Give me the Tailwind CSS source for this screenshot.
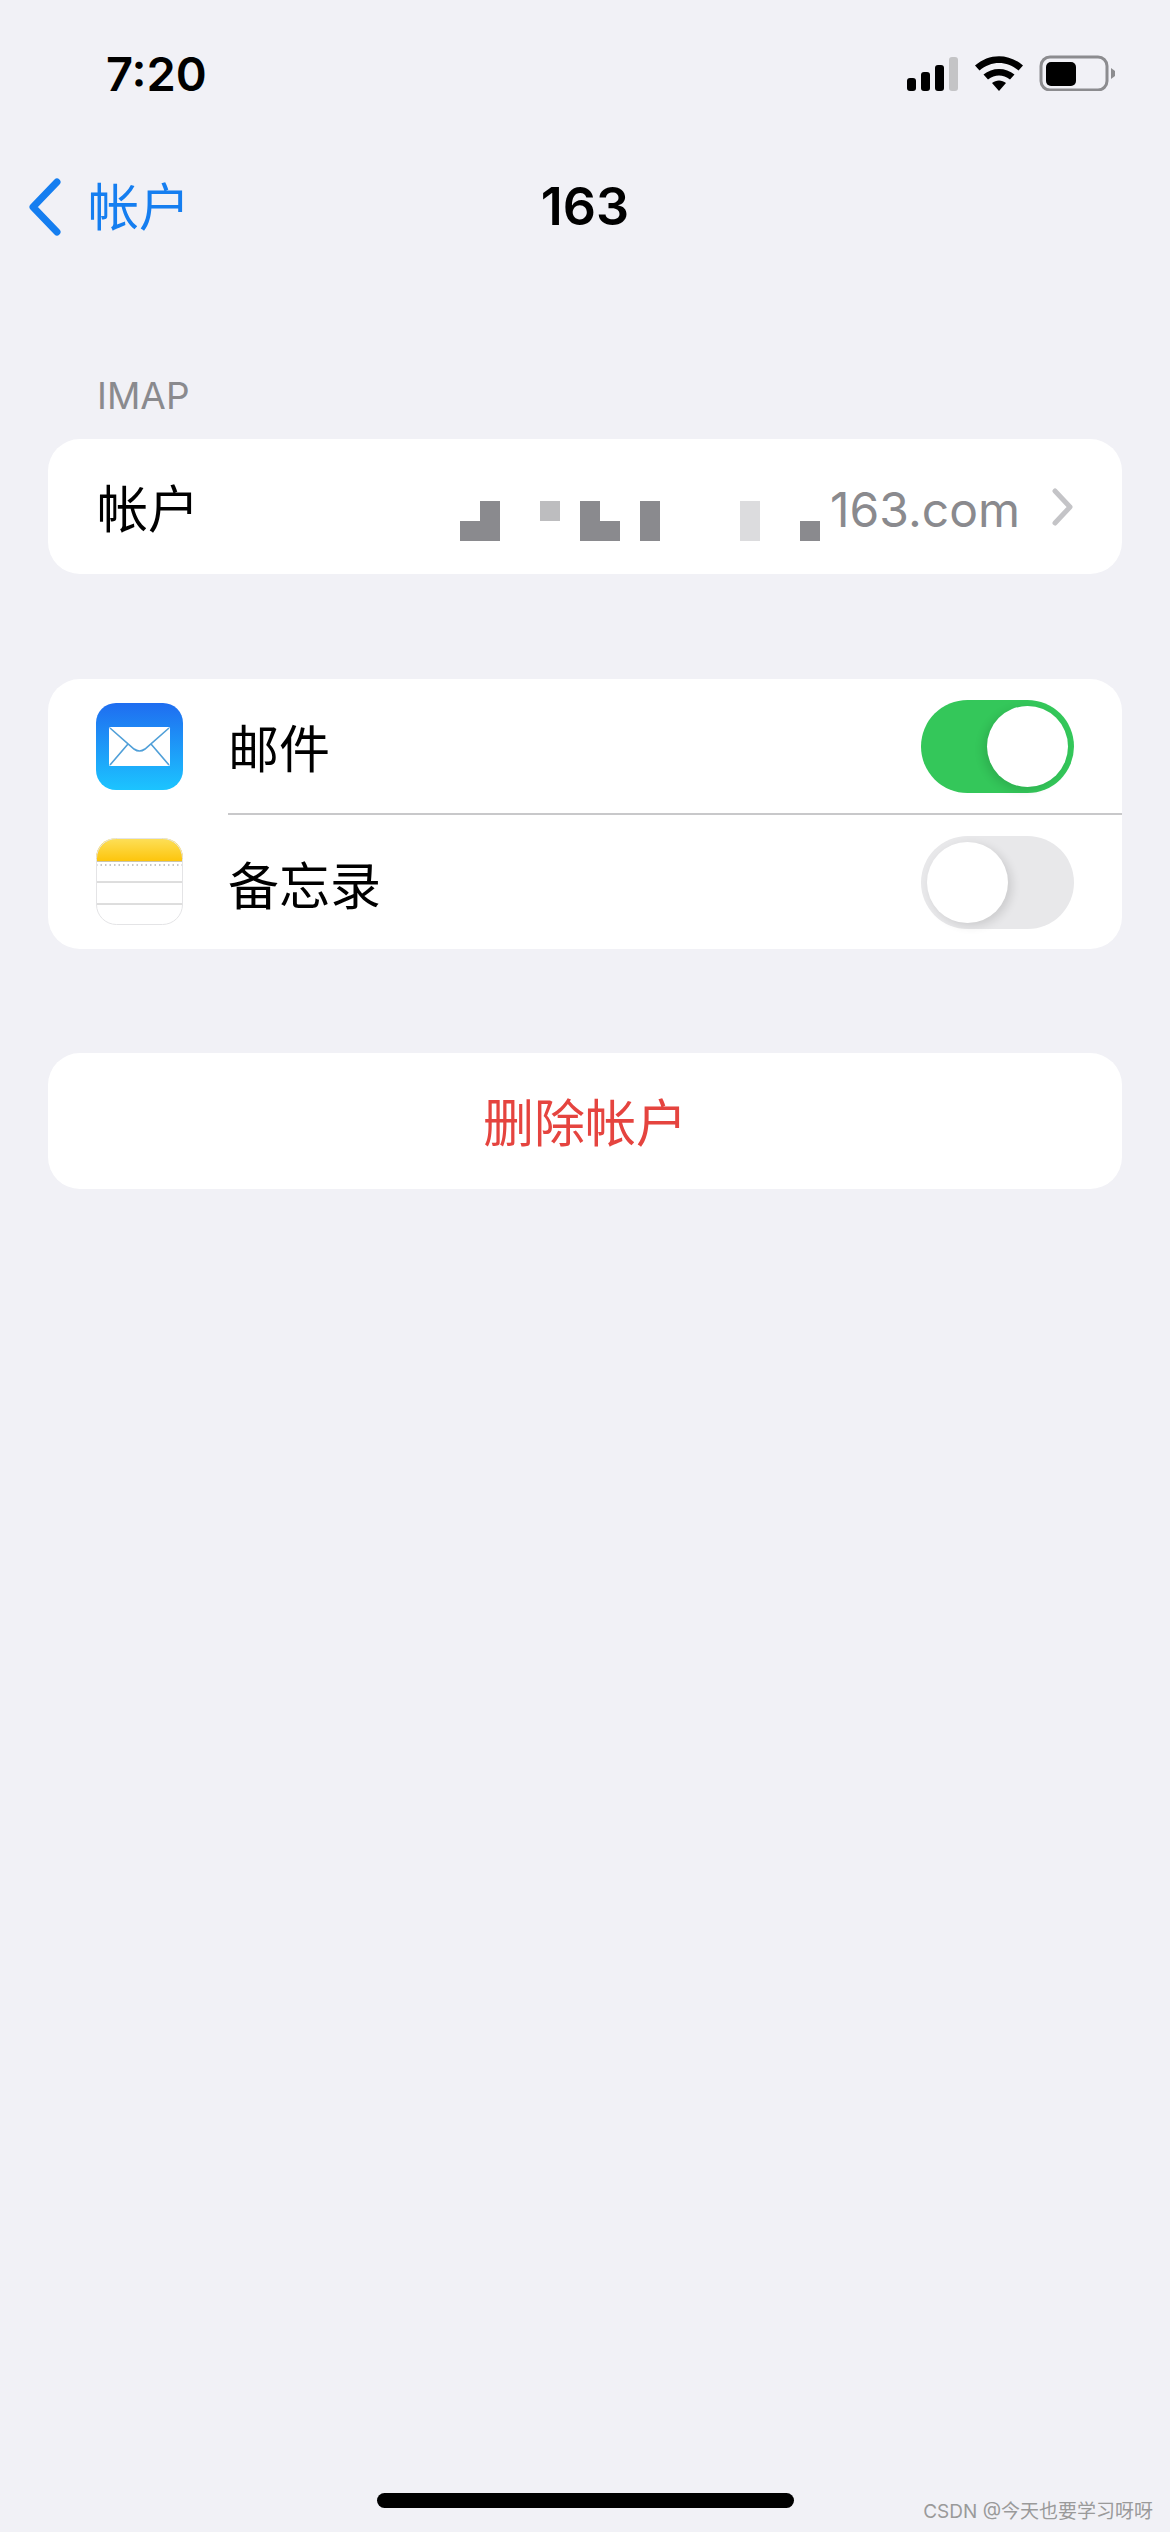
<!DOCTYPE html>
<html lang="zh-CN">
  <head>
    <meta charset="UTF-8" />
    <meta name="viewport" content="width=device-width, initial-scale=1.0" />
    <title>163</title>
    <script src="https://cdn.jsdelivr.net/npm/@tailwindcss/browser@4"></script>
  </head>
  <body class="bg-[#f1f1f6]">
    <div class="relative flex h-[2532px] w-[1170px] flex-col overflow-hidden bg-[#f1f1f6] font-['Inter','Noto_Sans_CJK_SC',sans-serif] text-black">
      <!-- status bar -->
      <div class="flex h-[162px] items-start justify-between pt-[46px] pl-[106px] pr-[55px]">
        <span class="text-[47px] leading-[56px] font-semibold">7:20</span>
        <svg class="mt-[9px]" width="208" height="36" viewBox="0 0 208 36">
          <rect x="0" y="23" width="9" height="13" rx="3" fill="#000" />
          <rect x="14" y="17" width="9" height="19" rx="3" fill="#000" />
          <rect x="28" y="10" width="9" height="26" rx="3" fill="#000" />
          <rect x="42" y="2" width="9" height="34" rx="3" fill="#c4c4c6" />
          <path d="M68 10.5 C82 -2 102 -2 116 10.5 L111.5 15.5 C100 5.5 84 5.5 72.5 15.5 Z" fill="#000" />
          <path d="M76.5 19.5 C85 12 99 12 107.5 19.5 L103 24.5 C96 19 88 19 81 24.5 Z" fill="#000" />
          <path d="M85 28 C89 24.6 95 24.6 99 28 L92 36 Z" fill="#000" />
          <rect x="134" y="2" width="66" height="33" rx="9" fill="none" stroke="#8c8c8f" stroke-width="3" />
          <rect x="139" y="7" width="30" height="24" rx="5" fill="#000" />
          <path d="M204 13 L208 16 Q209 18 208 21 L204 24 Z" fill="#8c8c8f" />
        </svg>
      </div>

      <!-- nav bar -->
      <div class="grid h-[90px] grid-cols-[1fr_auto_1fr] items-center">
        <div class="flex items-center pl-[28px] text-[#157ef0]">
          <svg width="34" height="58" viewBox="0 0 34 58" fill="none">
            <path d="M29 4 L5 29 L29 54" stroke="#157ef0" stroke-width="7" stroke-linecap="round" stroke-linejoin="round" />
          </svg>
          <span class="mt-[2px] ml-[26px] text-[51px] leading-[60px]">帐户</span>
        </div>
        <span class="text-[52px] leading-[60px] font-semibold">163</span>
        <div></div>
      </div>

      <!-- IMAP section -->
      <div class="mt-[121px] pl-[97px] text-[37px] leading-[46px] text-[#8a8a8e]">IMAP</div>
      <div class="mx-[48px] mt-[20px] flex h-[135px] items-center rounded-[32px] bg-white pr-[48px] pl-[49px]">
        <span class="mt-[6px] text-[51px] leading-[60px]">帐户</span>
        <div class="ml-[261px] grid h-[40px] w-[360px] shrink-0 translate-y-[14px] grid-cols-[repeat(18,20px)] grid-rows-2">
          <div class="col-start-1 row-start-2 bg-[#8a8a8e]"></div>
          <div class="col-start-2 row-span-2 row-start-1 bg-[#8a8a8e]"></div>
          <div class="col-start-5 row-start-1 bg-[#bdbdbf]"></div>
          <div class="col-start-7 row-span-2 row-start-1 bg-[#8a8a8e]"></div>
          <div class="col-start-8 row-start-2 bg-[#8a8a8e]"></div>
          <div class="col-start-10 row-span-2 row-start-1 bg-[#8a8a8e]"></div>
          <div class="col-start-15 row-span-2 row-start-1 bg-[#dcdcde]"></div>
          <div class="col-start-18 row-start-2 bg-[#8a8a8e]"></div>
        </div>
        <span class="mt-[6px] ml-[10px] text-[48px] leading-[60px] text-[#8a8a8e]">163.com</span>
        <svg class="ml-auto" width="22" height="38" viewBox="0 0 22 38" fill="none">
          <path d="M3 3 L18 19 L3 35" stroke="#c4c4c7" stroke-width="5" stroke-linecap="round" stroke-linejoin="round" />
        </svg>
      </div>

      <!-- apps section -->
      <div class="mx-[48px] mt-[105px] flex h-[270px] flex-col rounded-[32px] bg-white">
        <div class="flex h-[134px] items-center pr-[48px] pl-[48px]">
          <svg width="87" height="87" viewBox="0 0 87 87">
            <defs>
              <linearGradient id="mailBg" x1="0" y1="0" x2="0" y2="1">
                <stop offset="0" stop-color="#1f6df0" />
                <stop offset="1" stop-color="#1cc4ff" />
              </linearGradient>
            </defs>
            <rect width="87" height="87" rx="20" fill="url(#mailBg)" />
            <rect x="13" y="24" width="61" height="39" rx="1.5" fill="#fff" />
            <path d="M14 25 L38 46 Q43.5 50 49 46 L73 25" fill="none" stroke="#4f9fd8" stroke-width="1.6" />
            <path d="M14 62 L32 41 M73 62 L55 41" fill="none" stroke="#4f9fd8" stroke-width="1.6" />
          </svg>
          <span class="mt-[8px] ml-[45px] text-[51px] leading-[60px]">邮件</span>
          <div class="ml-auto flex h-[93px] w-[153px] items-center justify-end rounded-full bg-[#34c75a] p-[6px]">
            <div class="size-[81px] rounded-full bg-white shadow-[-4px_3px_10px_rgba(0,0,0,0.12)]"></div>
          </div>
        </div>
        <div class="ml-[180px] h-[2px] bg-[#c8c8ca]"></div>
        <div class="flex h-[134px] items-center pr-[48px] pl-[48px]">
          <svg class="mb-[2px]" width="87" height="87" viewBox="0 0 87 87">
            <defs>
              <linearGradient id="notesTop" x1="0" y1="0" x2="0" y2="1">
                <stop offset="0" stop-color="#fde05a" />
                <stop offset="1" stop-color="#fdc50c" />
              </linearGradient>
              <clipPath id="notesClip">
                <rect width="87" height="87" rx="20" />
              </clipPath>
            </defs>
            <g clip-path="url(#notesClip)">
              <rect width="87" height="87" fill="#fff" />
              <rect width="87" height="23" fill="url(#notesTop)" />
              <path d="M0 23.5 H87" stroke="#c9c4ad" stroke-width="1" />
              <path d="M0 27 H87" stroke="#b5b5b5" stroke-width="1.5" stroke-dasharray="1.5 3" />
              <path d="M0 44 H87 M0 66 H87" stroke="#bcbcbc" stroke-width="1" />
            </g>
            <rect x="0.5" y="0.5" width="86" height="86" rx="20" fill="none" stroke="#e4e4e6" stroke-width="1" />
          </svg>
          <span class="mt-[9px] ml-[45px] text-[51px] leading-[60px]">备忘录</span>
          <div class="ml-auto flex h-[93px] w-[153px] items-center justify-start rounded-full bg-[#e8e8ea] p-[6px]">
            <div class="size-[81px] rounded-full bg-white shadow-[4px_3px_10px_rgba(0,0,0,0.12)]"></div>
          </div>
        </div>
      </div>

      <!-- delete button -->
      <div class="mx-[48px] mt-[104px] flex h-[136px] items-center justify-center rounded-[32px] bg-white">
        <span class="mt-[6px] text-[51px] leading-[60px] text-[#e5443f]">删除帐户</span>
      </div>

      <!-- home indicator -->
      <div class="mt-auto flex h-[39px] justify-start pl-[377px]">
        <div class="h-[15px] w-[417px] rounded-full bg-black"></div>
      </div>
      <span class="absolute right-[17px] bottom-[8px] text-[19px] leading-[24px] text-[#9a9a9a]">CSDN @今天也要学习呀呀</span>
    </div>
  </body>
</html>
